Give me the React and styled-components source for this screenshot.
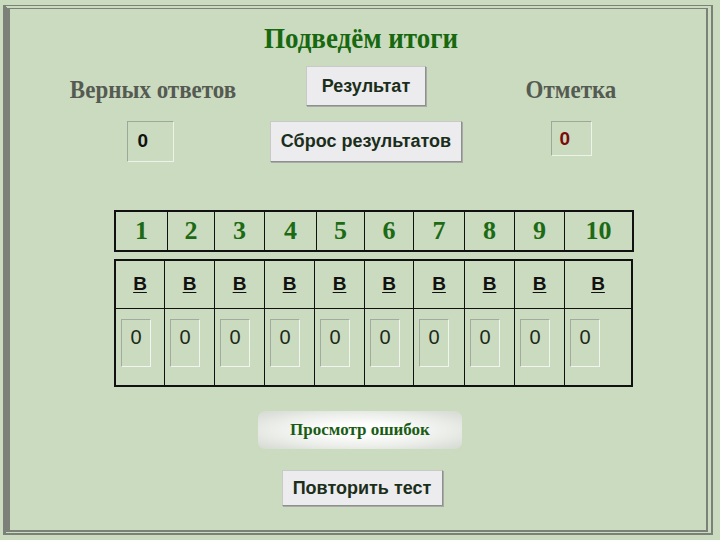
import React from "react";
import styled, { createGlobalStyle } from "styled-components";

const GlobalStyle = createGlobalStyle`
  html, body {
    margin: 0;
    padding: 0;
    background: #cbdbbf;
  }
`;

const headWidths = [52, 47, 50, 52, 48, 49, 51, 50, 50, 68];
const bodyWidths = [49, 50, 50, 50, 50, 49, 51, 50, 50, 67];

const Frame = styled.div`
  box-sizing: border-box;
  width: 710px;
  height: 530px;
  margin: 5px 0 0 3px;
  background: #cbdbbf;
  border-left: 7px solid #7b8079;
  border-top: 4px double #7b8079;
  border-right: 7px double #7b8079;
  border-bottom: 5px double #7b8079;
  display: flex;
  flex-direction: column;
  align-items: center;
`;

const Title = styled.h1`
  margin: 14px 0 0 0;
  font-family: "Liberation Serif", "Times New Roman", serif;
  font-weight: bold;
  font-size: 27px;
  line-height: 30px;
  color: #17680f;
  transform: translateX(3px) scaleY(1.08);
`;

const Summary = styled.div`
  display: grid;
  grid-template-columns: 186px 240px 170px;
  grid-template-rows: 40px 41px;
  row-gap: 15px;
  margin: 13px 0 0 0;
  align-self: flex-start;
  margin-left: 50px;
`;

const Label = styled.div`
  font-family: "Liberation Serif", "Times New Roman", serif;
  font-weight: bold;
  font-size: 23px;
  color: #555a52;
  align-self: end;
  justify-self: center;
  line-height: 24px;
  margin-bottom: 4px;
  transform: scaleY(1.1);
`;

const Cell = styled.div`
  display: flex;
  justify-content: center;
  align-items: flex-start;
`;

const Button = styled.button`
  box-sizing: border-box;
  height: ${(p) => p.$h || 40}px;
  width: ${(p) => p.$w}px;
  background: #ececef;
  border: 1px solid #c8cac8;
  border-right-color: #8d908c;
  border-bottom-color: #8d908c;
  box-shadow: 1px 1px 0 #a7aaa6;
  font-family: "Liberation Sans", Arial, sans-serif;
  font-weight: bold;
  font-size: ${(p) => p.$fs || 18}px;
  color: #1b2e1a;
  padding: 0;
  cursor: pointer;
`;

const ScoreBox = styled.div`
  box-sizing: border-box;
  width: ${(p) => p.$w}px;
  height: ${(p) => p.$h}px;
  margin-left: ${(p) => p.$shift || 0}px;
  border: 1px solid #eef3ea;
  border-top-color: #9ea89a;
  border-left-color: #9ea89a;
  font-family: "Liberation Sans", Arial, sans-serif;
  font-weight: bold;
  font-size: 19px;
  color: ${(p) => p.$color || "#111"};
  padding: ${(p) => p.$pad || "8px 0 0 10px"};
  line-height: 22px;
`;

const Table = styled.div`
  display: grid;
  grid-template-columns: ${(p) => p.$cols};
  grid-auto-rows: ${(p) => p.$rows};
  gap: 1px;
  background: #111;
  border: 2px solid #111;
  align-self: flex-start;
  margin-left: 104px;
  margin-top: ${(p) => p.$top}px;
`;

const HeadCell = styled.div`
  background: #cbdbbf;
  display: flex;
  align-items: center;
  justify-content: center;
  font-family: "Liberation Serif", "Times New Roman", serif;
  font-weight: bold;
  font-size: 26px;
  color: #1c6a14;
`;

const LetterCell = styled.div`
  background: #cbdbbf;
  display: flex;
  justify-content: center;
  padding-top: 12px;
  font-family: "Liberation Sans", Arial, sans-serif;
  font-weight: bold;
  font-size: 19px;
  color: #111;
  text-decoration: underline;
  text-underline-offset: 2px;
`;

const InputCell = styled.div`
  background: #cbdbbf;
  padding: 10px 0 0 5px;
`;

const SmallBox = styled.div`
  box-sizing: border-box;
  width: 30px;
  height: 48px;
  border: 1px solid #f2f5ef;
  border-top-color: #a3ab9f;
  border-left-color: #a3ab9f;
  font-family: "Liberation Sans", Arial, sans-serif;
  font-size: 20px;
  color: #1c2a1a;
  text-align: center;
  padding-top: 6px;
  line-height: 22px;
`;

const ErrorsButton = styled.button`
  box-sizing: border-box;
  width: 204px;
  height: 38px;
  margin-top: 24px;
  transform: translateX(2px);
  border: none;
  border-radius: 7px;
  background: radial-gradient(ellipse at center, #ffffff 20%, #eceeea 60%, #d4d9d1 100%);
  font-family: "Liberation Serif", "Times New Roman", serif;
  font-weight: bold;
  font-size: 17px;
  color: #1a5c14;
  cursor: pointer;
`;

const RepeatWrap = styled.div`
  margin-top: 21px;
  transform: translateX(4px);
`;

export default function App() {
  return (
    <>
      <GlobalStyle />
      <Frame>
        <Title>Подведём итоги</Title>
        <Summary>
          <Label>Верных ответов</Label>
          <Cell>
            <Button $w={120}>Результат</Button>
          </Cell>
          <Label>Отметка</Label>
          <Cell>
            <ScoreBox $w={47} $h={41} $shift={-6}>
              0
            </ScoreBox>
          </Cell>
          <Cell>
            <Button $w={192} $h={41}>Сброс результатов</Button>
          </Cell>
          <Cell>
            <ScoreBox $w={41} $h={35} $color="#7a0c0a" $pad="6px 0 0 8px">
              0
            </ScoreBox>
          </Cell>
        </Summary>

        <Table
          $cols={headWidths.map((w) => w - 1 + "px").join(" ")}
          $rows="38px"
          $top={48}
        >
          {headWidths.map((_, i) => (
            <HeadCell key={i}>{i + 1}</HeadCell>
          ))}
        </Table>

        <Table
          $cols={bodyWidths.map((w) => w - 1 + "px").join(" ")}
          $rows="47px 76px"
          $top={7}
        >
          {bodyWidths.map((_, i) => (
            <LetterCell key={"l" + i}>В</LetterCell>
          ))}
          {bodyWidths.map((_, i) => (
            <InputCell key={"v" + i}>
              <SmallBox>0</SmallBox>
            </InputCell>
          ))}
        </Table>

        <ErrorsButton>Просмотр ошибок</ErrorsButton>
        <RepeatWrap>
          <Button $w={161} $h={36}>
            Повторить тест
          </Button>
        </RepeatWrap>
      </Frame>
    </>
  );
}
